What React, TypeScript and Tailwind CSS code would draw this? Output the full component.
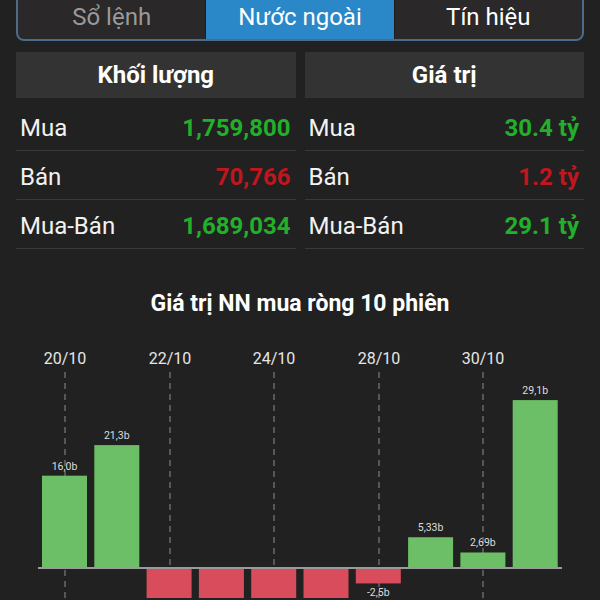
import React from "react";

const TABS = [
  { label: "Sổ lệnh", active: false, dim: true },
  { label: "Nước ngoài", active: true, dim: false },
  { label: "Tín hiệu", active: false, dim: false },
];

interface Row {
  label: string;
  value: string;
  up: boolean;
}

const VOLUME: Row[] = [
  { label: "Mua", value: "1,759,800", up: true },
  { label: "Bán", value: "70,766", up: false },
  { label: "Mua-Bán", value: "1,689,034", up: true },
];

const VALUE: Row[] = [
  { label: "Mua", value: "30.4 tỷ", up: true },
  { label: "Bán", value: "1.2 tỷ", up: false },
  { label: "Mua-Bán", value: "29.1 tỷ", up: true },
];

// 10 sessions, billions
const BARS = [
  { v: 16.0, label: "16,0b" },
  { v: 21.3, label: "21,3b" },
  { v: -9.1, label: "-9,1b" },
  { v: -11.4, label: "-11,4b" },
  { v: -8.7, label: "-8,7b" },
  { v: -10.2, label: "-10,2b" },
  { v: -2.5, label: "-2,5b" },
  { v: 5.33, label: "5,33b" },
  { v: 2.69, label: "2,69b" },
  { v: 29.1, label: "29,1b" },
];

const DATES = [
  { x: 65, t: "20/10" },
  { x: 170, t: "22/10" },
  { x: 274, t: "24/10" },
  { x: 379, t: "28/10" },
  { x: 483, t: "30/10" },
];

const H = 268;
const BASE = 238;
const SCALE = 5.77;

const StatColumn = ({ title, rows }: { title: string; rows: Row[] }) => (
  <div className="flex-1 flex flex-col">
    <div className="h-[46px] bg-[#333333] flex items-center justify-center text-white font-bold text-[24px]">
      {title}
    </div>
    <div className="mt-[4px]">
      {rows.map((r) => (
        <div key={r.label} className="h-[49px] pt-[3px] border-b border-[#393939] flex items-center justify-between pl-[4px] pr-[5px]">
          <span className="text-[#f2f2f2] text-[24px]">{r.label}</span>
          <span className={`text-[24px] font-bold ${r.up ? "text-[#22b02a]" : "text-[#c0161d]"}`}>{r.value}</span>
        </div>
      ))}
    </div>
  </div>
);

const NetChart = () => (
  <svg width="600" height={H} viewBox={`0 0 600 ${H}`} className="block">
    {DATES.map((d) => (
      <g key={d.t}>
        <text x={d.x} y={34} textAnchor="middle" fill="#e6e6e6" fontSize="16" fontFamily="Roboto, sans-serif">
          {d.t}
        </text>
        <line x1={d.x} y1={42} x2={d.x} y2={H} stroke="#6a6a6a" strokeWidth="1.5" strokeDasharray="6 5" />
      </g>
    ))}
    {BARS.map((b, i) => {
      const x = 42 + i * 52.3;
      const h = Math.abs(b.v) * SCALE;
      const up = b.v >= 0;
      const ly = up ? BASE - h - 6 : BASE + h + 14;
      return (
        <g key={i}>
          <rect x={x} y={up ? BASE - h : BASE + 1} width={45} height={h} fill={up ? "#6cbf66" : "#d94c5b"} />
          {ly < H && (
            <text x={x + 22.5} y={ly} textAnchor="middle" fill="#dddddd" fontSize="10.5" fontFamily="Roboto, sans-serif">
              {b.label}
            </text>
          )}
        </g>
      );
    })}
    <line x1={38} y1={BASE} x2={562} y2={BASE} stroke="#9a9a9a" strokeWidth="2" />
  </svg>
);

export default function App() {
  return (
    <div className="min-h-screen bg-[#212121] overflow-hidden" style={{ fontFamily: "Roboto, 'Noto Sans', sans-serif" }}>
      <div className="mx-4 -mt-[7px] h-[48px] flex border-2 border-t-0 border-[#4b6b89] rounded-b-lg overflow-hidden bg-[#2a2828]">
        {TABS.map((t, i) => (
          <div
            key={t.label}
            className={`flex-1 flex items-center justify-center pt-[2px] text-[24px] ${i > 0 ? "border-l border-[#1e1e1e]" : ""} ${
              t.active ? "bg-[#2a87c8] text-white" : t.dim ? "text-[#9a9a9a]" : "text-white"
            }`}
          >
            {t.label}
          </div>
        ))}
      </div>

      <div className="mx-4 mt-[11px] flex gap-[9px]">
        <StatColumn title="Khối lượng" rows={VOLUME} />
        <StatColumn title="Giá trị" rows={VALUE} />
      </div>

      <div className="mt-[41px] text-center text-white font-bold text-[23px] leading-7">Giá trị NN mua ròng 10 phiên</div>

      <div className="mt-[12px]">
        <NetChart />
      </div>
    </div>
  );
}
